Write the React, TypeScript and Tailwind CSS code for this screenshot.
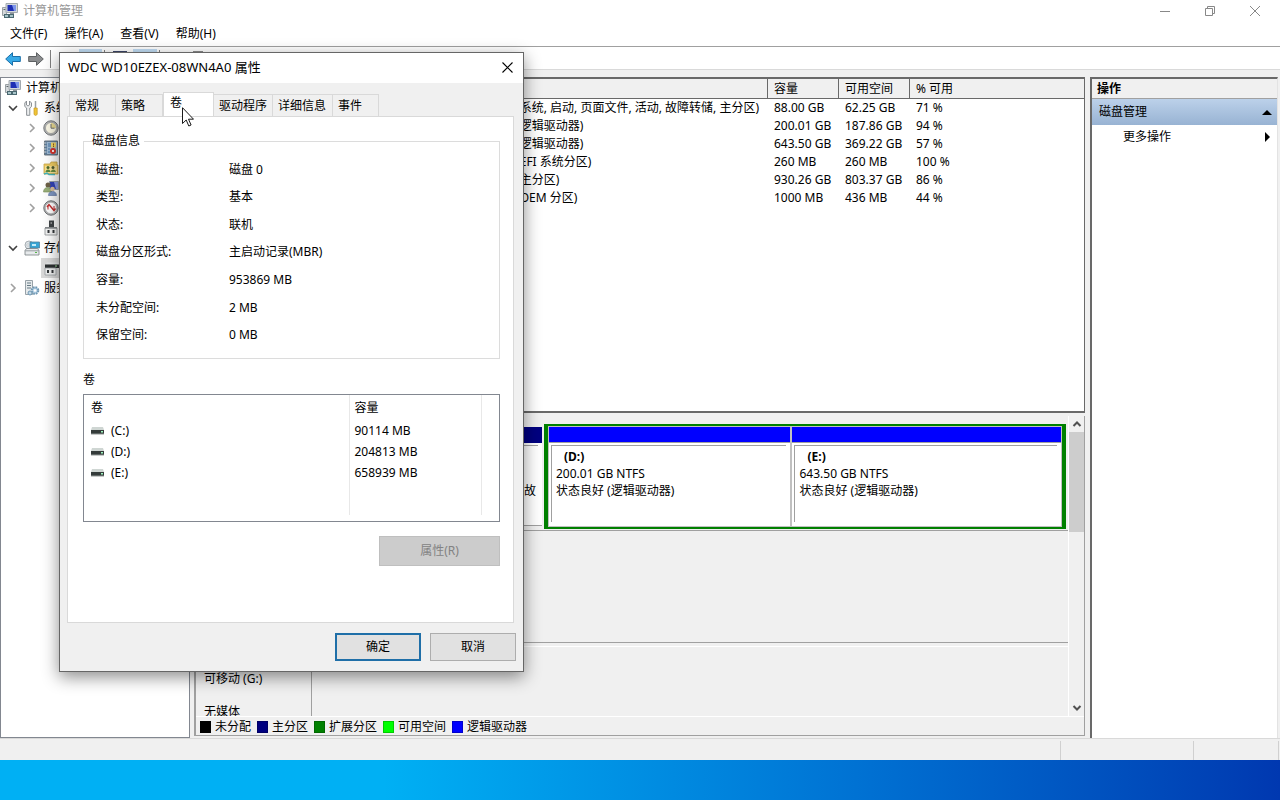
import type { ReactNode } from "react";

interface Volume {
  status: string;
  capacity: string;
  free: string;
  percent: string;
}

const volumes: Volume[] = [
  { status: "状态良好 (系统, 启动, 页面文件, 活动, 故障转储, 主分区)", capacity: "88.00 GB", free: "62.25 GB", percent: "71 %" },
  { status: "状态良好 (逻辑驱动器)", capacity: "200.01 GB", free: "187.86 GB", percent: "94 %" },
  { status: "状态良好 (逻辑驱动器)", capacity: "643.50 GB", free: "369.22 GB", percent: "57 %" },
  { status: "状态良好 (EFI 系统分区)", capacity: "260 MB", free: "260 MB", percent: "100 %" },
  { status: "状态良好 (主分区)", capacity: "930.26 GB", free: "803.37 GB", percent: "86 %" },
  { status: "状态良好 (OEM 分区)", capacity: "1000 MB", free: "436 MB", percent: "44 %" },
];

const diskInfo = [
  ["磁盘:", "磁盘 0"],
  ["类型:", "基本"],
  ["状态:", "联机"],
  ["磁盘分区形式:", "主启动记录(MBR)"],
  ["容量:", "953869 MB"],
  ["未分配空间:", "2 MB"],
  ["保留空间:", "0 MB"],
];

const diskVolumes = [
  ["(C:)", "90114 MB"],
  ["(D:)", "204813 MB"],
  ["(E:)", "658939 MB"],
];

const legend = [
  { label: "未分配", color: "bg-black" },
  { label: "主分区", color: "bg-[#000080]" },
  { label: "扩展分区", color: "bg-[#008000]" },
  { label: "可用空间", color: "bg-[#00ff00]" },
  { label: "逻辑驱动器", color: "bg-[#0000ff]" },
];

function Icon({ children }: { children: ReactNode }) {
  return (
    <svg viewBox="0 0 16 16" className="w-4 h-4 shrink-0">
      {children}
    </svg>
  );
}

function ComputerIcon() {
  return (
    <Icon>
      <path d="M0.5 4.5h4v8h-4z" fill="#d5d9dc" stroke="#9aa1a5" />
      <path d="M1.5 6.5h2" stroke="#5b6468" />
      <path d="M4 0.500h11.500v9H4z" fill="#d3d8dc" stroke="#a2a9af" />
      <path d="M5.500 2H14v6H5.500z" fill="#1e2fb4" />
      <path d="M10 2h4v6h-2z" fill="#7d95ea" />
      <path d="M8 9.500h4v1.500H8z" fill="#8d959c" />
      <path d="M2 11h10v4H2z" fill="#4a6870" />
      <path d="M3 12h3v2H3zM8 12h3v2H8z" fill="#a8c4c9" />
    </Icon>
  );
}

function ToolsIcon() {
  return (
    <Icon>
      <path d="M2.500 1v4l1.500 1 1.500-1V1L7.500 3v3.500L5.800 8v7.300H2.600V8L0.800 6.500V3z" fill="#eceeef" stroke="#81878b" strokeWidth="0.9" />
      <path d="M11.500 1v7" stroke="#9aa0a3" strokeWidth="1.500" />
      <path d="M10 8h3.200v6.500l-1.600 1-1.600-1z" fill="#f0c436" stroke="#c59a22" strokeWidth="0.7" />
    </Icon>
  );
}

function ClockIcon() {
  return (
    <Icon>
      <circle cx="8" cy="8" r="7.200" fill="#b5b7b8" stroke="#747779" strokeWidth="1" />
      <circle cx="8" cy="8" r="5.500" fill="#fbf8e6" stroke="#8d8f90" strokeWidth="0.6" />
      <path d="M8 8V3a5 5 0 0 1 5 5z" fill="#eadb92" />
      <path d="M8 4v4.200h3.500" fill="none" stroke="#6a6c6e" />
    </Icon>
  );
}

function EventIcon() {
  return (
    <Icon>
      <path d="M1.500 1h13v14h-13z" fill="#5c7d9c" stroke="#6b7780" />
      <path d="M4 2h10v12H4z" fill="#9db9d2" />
      <path d="M0.500 3h3M0.500 6h3M0.500 9h3M0.500 12h3" stroke="#d4d8da" />
      <path d="M5 4h3M5 6h3M5 9h2M5 12h2" stroke="#4475a5" />
      <path d="M8 2.500h5v5H8z" fill="#f4d765" />
      <path d="M10.500 3.500v2M10.500 6v1" stroke="#8c5a1c" />
      <circle cx="10" cy="11" r="3" fill="#d5332b" />
      <path d="M9 10l2 2M11 10l-2 2" stroke="#fff" strokeWidth="0.900" />
    </Icon>
  );
}

function SharedFolderIcon() {
  return (
    <Icon>
      <path d="M1 4h6l1-2h6v3h1v9H1z" fill="#f0cd63" stroke="#c7a446" strokeWidth="0.8" />
      <path d="M2 6h12v7H2z" fill="#f9e194" />
      <circle cx="5" cy="7.500" r="1.500" fill="#4c6b2e" />
      <circle cx="10" cy="7.500" r="1.500" fill="#4f5a2f" />
      <path d="M2.500 12c0-3.500 5-3.500 5 0z" fill="#5d8a3a" />
      <path d="M7.800 12c0-3.500 5-3.500 5 0z" fill="#6a8c41" />
      <path d="M1 14l3-1 2 1.500h6" fill="none" stroke="#43b3ba" strokeWidth="1.500" />
    </Icon>
  );
}

function UsersIcon() {
  return (
    <Icon>
      <path d="M6.500 1.500h9v8h-9z" fill="#3343b8" stroke="#9aa1a9" />
      <path d="M11 2h4v7h-2z" fill="#8f9fe8" />
      <circle cx="5" cy="5" r="2.500" fill="#6d6047" />
      <path d="M0.500 12c0-6 8-6 8 0z" fill="#9ab07a" stroke="#748a56" strokeWidth="0.600" />
      <circle cx="9.500" cy="9" r="2.300" fill="#ddc09b" />
      <path d="M5.500 15.500c0-5.500 8-5.500 8 0z" fill="#7f97c4" stroke="#526a9c" strokeWidth="0.600" />
    </Icon>
  );
}

function PerformanceIcon() {
  return (
    <Icon>
      <circle cx="8" cy="8" r="7.200" fill="#b3b5b7" stroke="#6d7072" />
      <circle cx="8" cy="8" r="5.700" fill="#fff" stroke="#999" strokeWidth="0.500" />
      <path d="M4 7l2-2.500 5 6 1.500-2" fill="none" stroke="#c22b2b" strokeWidth="1.400" />
      <path d="M5 9.500v-4M11 6v4" stroke="#c22b2b" />
    </Icon>
  );
}

function DeviceIcon() {
  return (
    <Icon>
      <path d="M6 0.500h5V8H6z" fill="#3f4346" />
      <path d="M7.500 2.500h1.500v1H7.500z" fill="#ddd" />
      <path d="M2 8h12v7H2z" fill="#f3f4f4" stroke="#8b8f92" strokeWidth="0.800" />
      <path d="M2 7h12v1.500H2z" fill="#85898c" />
      <path d="M4.500 10h2v3h-2zM9.500 10h2v3h-2z" fill="#34373a" />
    </Icon>
  );
}

function StorageIcon() {
  return (
    <Icon>
      <circle cx="5" cy="5" r="4" fill="#dfe5e8" stroke="#98a0a4" strokeWidth="0.800" />
      <circle cx="4" cy="5" r="1.200" fill="#fff" stroke="#98a0a4" strokeWidth="0.500" />
      <path d="M6 2h9.500v6H6z" fill="#37a5d5" stroke="#52809a" strokeWidth="0.800" />
      <path d="M8 4h4v2H8z" fill="#c3edfa" />
      <path d="M1 10.500L2.500 8.500h11l1.500 2V15H1z" fill="#e7eaec" stroke="#767d81" strokeWidth="0.800" />
      <path d="M1 10.800h14" stroke="#979da1" />
      <path d="M11 12h2v1h-2z" fill="#55b548" />
    </Icon>
  );
}

function DiskIcon() {
  return (
    <Icon>
      <path d="M3 4l1-1.500h11L16 4z" fill="#e4e6e7" />
      <path d="M2 4.500h14v3.500H2z" fill="#2d3032" />
      <path d="M12 5.500h2v1h-2z" fill="#9ee49a" />
      <path d="M2 8h11v7H2z" fill="#eff0f0" stroke="#9b9fa2" strokeWidth="0.800" />
      <path d="M4 10h2v3H4zM8.500 10h2v3h-2z" fill="#34373a" />
    </Icon>
  );
}

function ServicesIcon() {
  return (
    <Icon>
      <path d="M1.500 0.500h7v14h-7z" fill="#e6eaec" stroke="#98a2a8" />
      <path d="M3 3h4M3 5.500h4M3 8h4" stroke="#667a84" />
      <circle cx="11" cy="10.500" r="3.300" fill="#b4d0e4" stroke="#6f97b3" strokeWidth="2" strokeDasharray="1.700 0.900" />
      <circle cx="11" cy="10.500" r="1.300" fill="#fff" />
      <circle cx="6" cy="13" r="2" fill="#c1d8e6" stroke="#6f97b3" />
    </Icon>
  );
}

function DriveIcon() {
  return (
    <svg viewBox="0 0 14 8" className="w-3.5 h-2 shrink-0">
      <path d="M1 0h11l1 3H0z" fill="#cfd6d3" />
      <path d="M0 3h13v4H0z" fill="#343b3a" />
      <path d="M0 7h13" stroke="#8f9694" />
      <path d="M10 4h2v1.500h-2z" fill="#9df5be" />
    </svg>
  );
}

function Chevron({ open }: { open?: boolean }) {
  return (
    <svg viewBox="0 0 10 10" className="w-2.5 h-2.5 shrink-0">
      <path
        d={open ? "M1 3l4 4 4-4" : "M3 1l4 4-4 4"}
        fill="none"
        stroke={open ? "#404040" : "#a0a0a0"}
        strokeWidth="1.600"
      />
    </svg>
  );
}

function ArrowIcon({ forward }: { forward?: boolean }) {
  return (
    <svg viewBox="0 0 16 14" className="w-4 h-3.5">
      <path
        d={forward ? "M8.500 0.700L15.300 7l-6.800 6.300V9.500H0.700v-5h7.800z" : "M7.500 0.700L0.700 7l6.800 6.300V9.500h7.800v-5H7.500z"}
        fill={forward ? "#8b8d8f" : "#37a9e6"}
        stroke={forward ? "#5d6062" : "#1b6fa8"}
      />
    </svg>
  );
}

interface TreeRowProps {
  icon: ReactNode;
  label?: string;
  indent: string;
  open?: boolean;
  leaf?: boolean;
  selected?: boolean;
}

function TreeRow({ icon, label, indent, open, leaf, selected }: TreeRowProps) {
  return (
    <li className={`flex items-center h-5 whitespace-nowrap ${indent}`}>
      {leaf ? <span className="w-2.5 shrink-0" /> : <Chevron open={open} />}
      <span className={`flex items-center h-5 ${selected ? "ml-1 pl-0.5 pr-24 bg-[#d9d9d9]" : "pl-1.5"}`}>
        {icon}
        {label && <span className="pl-1">{label}</span>}
      </span>
    </li>
  );
}

function ConsoleTree() {
  return (
    <nav className="w-[190px] shrink-0 overflow-hidden bg-white border border-[#828790]">
      <ul>
        <li className="flex items-center gap-[5px] h-5 pl-1 whitespace-nowrap">
          <ComputerIcon />
          <span>计算机管理</span>
        </li>
        <TreeRow indent="pl-[7px]" open icon={<ToolsIcon />} label="系统" />
        <TreeRow indent="pl-[26px]" icon={<ClockIcon />} />
        <TreeRow indent="pl-[26px]" icon={<EventIcon />} />
        <TreeRow indent="pl-[26px]" icon={<SharedFolderIcon />} />
        <TreeRow indent="pl-[26px]" icon={<UsersIcon />} />
        <TreeRow indent="pl-[26px]" icon={<PerformanceIcon />} />
        <TreeRow indent="pl-[26px]" leaf icon={<DeviceIcon />} />
        <TreeRow indent="pl-[7px]" open icon={<StorageIcon />} label="存储" />
        <TreeRow indent="pl-[26px]" leaf selected icon={<DiskIcon />} />
        <TreeRow indent="pl-[7px]" icon={<ServicesIcon />} label="服务" />
      </ul>
    </nav>
  );
}

function VolumeTable() {
  const head = "font-normal text-left px-1.5 border-r border-b border-[#696969] bg-[#f0f0f0]";
  return (
    <div className="flex-1 bg-white border-t-2 border-r border-b-2 border-l-2 border-[#696969]">
      <table className="w-full table-fixed border-separate border-spacing-0 whitespace-nowrap">
        <thead>
          <tr className="h-5">
            <th className={`${head} w-[269px]`}></th>
            <th className={head}></th>
            <th className={`${head} w-[71px]`}>容量</th>
            <th className={`${head} w-[71px]`}>可用空间</th>
            <th className={`${head} w-[174px] border-r-0`}>% 可用</th>
          </tr>
        </thead>
        <tbody>
          {volumes.map((v) => (
            <tr key={v.capacity} className="h-[18px] leading-[18px]">
              <td></td>
              <td className="p-0 overflow-hidden">{v.status}</td>
              <td className="px-1.5 py-0">{v.capacity}</td>
              <td className="px-1.5 py-0">{v.free}</td>
              <td className="px-1.5 py-0">{v.percent}</td>
            </tr>
          ))}
        </tbody>
      </table>
    </div>
  );
}

function Partition({ name, size, grow }: { name: string; size: string; grow: string }) {
  return (
    <div className={`flex flex-col min-w-0 ${grow}`}>
      <div className="h-4 bg-[#0000ff] border-b border-[#a0a0a0]" />
      <div className="flex-1 bg-white pt-0.5 pl-0.5 pr-1 pb-1">
        <div className="h-full border-l border-t border-[#a0a0a0] pl-1 pt-0.5 leading-[17px] whitespace-nowrap">
          <div className="font-bold pl-2">{name}</div>
          <div>{size}</div>
          <div>状态良好 (逻辑驱动器)</div>
        </div>
      </div>
    </div>
  );
}

function DiskGraph() {
  return (
    <div className="flex h-[300px]">
      <div className="flex-1 flex flex-col min-w-0 border-r border-white">
        <div className="flex h-[115px] pt-2 border-b border-[#a0a0a0]">
          <div className="w-[116px] shrink-0 border-r border-[#a0a0a0]" />
          <div className="flex flex-col w-[230px] shrink-0 pt-[3px] pb-1">
            <div className="h-4 bg-[#000080]" />
            <div className="flex-1 bg-white pt-0.5 pr-1 border-b border-[#a0a0a0]">
              <div className="h-full border-t border-[#a0a0a0] pt-9 pr-0.5 text-right leading-[17px] whitespace-nowrap overflow-hidden">
                状态良好 (系统, 启动, 页面文件, 活动, 故
              </div>
            </div>
          </div>
          <div className="flex-1 min-w-0 flex mr-0.5 mb-px ml-0.5 border-x-4 border-y-2 border-[#008000] bg-[#c0c0c0] gap-0.5 p-px">
            <Partition name="(D:)" size="200.01 GB NTFS" grow="flex-[241]" />
            <Partition name="(E:)" size="643.50 GB NTFS" grow="flex-[268]" />
          </div>
        </div>
        <div className="flex h-[112px] border-b border-[#a0a0a0]">
          <div className="w-[116px] border-r border-[#a0a0a0]" />
        </div>
        <div className="flex-1 flex min-h-0 mt-[3px] border-t border-white">
          <div className="w-[116px] border-r border-[#a0a0a0] pl-2 pt-[15px] leading-[33px] overflow-hidden">
            <div>可移动 (G:)</div>
            <div>无媒体</div>
          </div>
        </div>
      </div>
      <div className="flex flex-col items-center w-[15px] bg-[#f0f0f0]">
        <button type="button" aria-label="向上滚动" className="h-4 w-full flex items-center justify-center">
          <svg viewBox="0 0 10 10" className="w-2.5 h-2.5">
            <path d="M1.500 7L5 3.500 8.500 7" fill="none" stroke="#505050" strokeWidth="2" />
          </svg>
        </button>
        <div className="w-full h-[100px] bg-[#cdcdcd]" />
        <button type="button" aria-label="向下滚动" className="mt-auto h-4 w-full flex items-center justify-center">
          <svg viewBox="0 0 10 10" className="w-2.5 h-2.5">
            <path d="M1.500 3L5 6.500 8.500 3" fill="none" stroke="#505050" strokeWidth="2" />
          </svg>
        </button>
      </div>
    </div>
  );
}

function ActionsPane() {
  return (
    <aside className="w-[188px] shrink-0 mr-0.5 bg-white border-t-2 border-l-2 border-t-[#696969] border-l-[#696969] border-r border-r-[#e3e3e3]">
      <h2 className="h-5 flex items-center pl-[5px] font-bold bg-[#f0f0f0] border-b border-[#a0a0a0]">操作</h2>
      <button type="button" className="w-full h-[26px] flex items-center justify-between pl-[7px] pr-[5px] bg-linear-to-b from-[#bcd1ea] to-[#98b3d3]">
        磁盘管理
        <svg viewBox="0 0 10 5" className="w-2.5 h-[5px]">
          <path d="M0 5l5-5 5 5z" />
        </svg>
      </button>
      <button type="button" className="w-full h-6 flex items-center justify-between pl-[31px] pr-[7px]">
        更多操作
        <svg viewBox="0 0 5 10" className="w-[5px] h-2.5">
          <path d="M0 0l5 5-5 5z" />
        </svg>
      </button>
    </aside>
  );
}

function Tab({ label, width, active }: { label: string; width: string; active?: boolean }) {
  return (
    <button
      type="button"
      role="tab"
      aria-selected={!!active}
      className={`${width} text-left border-[#d9d9d9] ${
        active ? "h-[25px] -mb-px bg-white border-x border-t pl-1.5 pb-1" : "h-[22px] bg-[#f0f0f0] border-t border-r pl-[5px]"
      }`}
    >
      {label}
    </button>
  );
}

function PropertiesDialog() {
  const button = "w-[86px] h-7 bg-[#e1e1e1]";
  return (
    <div
      role="dialog"
      aria-label="WDC WD10EZEX-08WN4A0 属性"
      className="absolute left-[59px] top-[52px] w-[465px] h-[620px] flex flex-col bg-[#f0f0f0] border border-[#666] shadow-[0_5px_16px_rgba(0,0,0,0.45)]"
    >
      <header className="flex items-center justify-between h-[30px] pl-2 pr-2.5 pb-0.5 bg-white">
        <h1 className="text-[13px]">WDC WD10EZEX-08WN4A0 属性</h1>
        <button type="button" aria-label="关闭">
          <svg viewBox="0 0 11 11" className="w-[11px] h-[11px]">
            <path d="M0.500 0.500l10 10M10.500 0.500l-10 10" stroke="#000" strokeWidth="1.100" />
          </svg>
        </button>
      </header>

      <div role="tablist" className="flex items-end h-[33px] pl-[9px]">
        <Tab label="常规" width="w-[47px] border-l" />
        <Tab label="策略" width="w-[47px]" />
        <Tab label="卷" width="w-[51px]" active />
        <Tab label="驱动程序" width="w-[59px]" />
        <Tab label="详细信息" width="w-[60px]" />
        <Tab label="事件" width="w-[46px]" />
      </div>

      <div role="tabpanel" className="flex-1 flex flex-col ml-[7px] mr-[9px] pl-[15px] pr-[13px] pt-[15px] bg-white border border-[#d9d9d9]">
        <fieldset className="border border-[#dcdcdc] h-[227px] pl-3">
          <legend className="-ml-1 pr-1 leading-[18px]">磁盘信息</legend>
          <dl className="grid grid-cols-[133px_1fr] grid-rows-7 h-[193px] mt-1.5 items-center">
            {diskInfo.map(([label, value]) => (
              <div key={label} className="contents">
                <dt>{label}</dt>
                <dd>{value}</dd>
              </div>
            ))}
          </dl>
        </fieldset>

        <h2 className="mt-3 leading-[18px]">卷</h2>
        <div className="mt-[5px] h-32 border border-[#828790]">
          <table className="w-full h-[120px] table-fixed border-collapse">
            <thead>
              <tr className="h-[25px]">
                <th className="w-[265px] px-[7px] py-0 text-left font-normal border-r border-[#e8e8e8]">卷</th>
                <th className="w-[132px] px-[5px] py-0 text-left font-normal border-r border-[#e8e8e8]">容量</th>
                <th></th>
              </tr>
            </thead>
            <tbody>
              {diskVolumes.map(([name, size]) => (
                <tr key={name} className="h-[21px]">
                  <td className="px-[7px] py-0 border-r border-[#e8e8e8]">
                    <span className="flex items-center gap-1.5">
                      <DriveIcon />
                      {name}
                    </span>
                  </td>
                  <td className="px-[5px] py-0 border-r border-[#e8e8e8]">{size}</td>
                  <td></td>
                </tr>
              ))}
              <tr>
                <td className="border-r border-[#e8e8e8]"></td>
                <td className="border-r border-[#e8e8e8]"></td>
                <td></td>
              </tr>
            </tbody>
          </table>
        </div>
        <button type="button" disabled className="self-end w-[121px] h-[30px] mt-3.5 bg-[#cccccc] border border-[#bfbfbf] text-[#838383]">
          属性(R)
        </button>
      </div>

      <footer className="flex justify-end gap-[9px] pt-2.5 pb-2.5 pr-[7px]">
        <button type="button" className={`${button} border-2 border-[#1f6fa8]`}>确定</button>
        <button type="button" className={`${button} border border-[#adadad]`}>取消</button>
      </footer>
    </div>
  );
}

export default function App() {
  return (
    <div className="relative min-h-screen flex flex-col bg-[#f0f0f0] text-black text-[12px] leading-4 cursor-default font-['Noto_Sans','Noto_Sans_CJK_SC',sans-serif]">
      <header className="bg-white">
        <div className="flex items-center h-[22px] pl-0.5">
          <ComputerIcon />
          <span className="pl-[5px] text-[#999]">计算机管理</span>
          <div className="flex items-center gap-[35px] ml-auto pr-5">
            <button type="button" aria-label="最小化">
              <svg viewBox="0 0 10 10" className="w-2.5 h-2.5"><path d="M0 5.500h10" stroke="#888" /></svg>
            </button>
            <button type="button" aria-label="还原">
              <svg viewBox="0 0 10 10" className="w-2.5 h-2.5">
                <path d="M0.500 2.500h7v7h-7zM2.500 2.500v-2h7v7h-2" fill="none" stroke="#888" />
              </svg>
            </button>
            <button type="button" aria-label="关闭">
              <svg viewBox="0 0 10 10" className="w-2.5 h-2.5"><path d="M0 0l10 10M10 0L0 10" stroke="#888" /></svg>
            </button>
          </div>
        </div>
        <div role="menubar" className="flex items-center gap-[17px] h-[25px] pl-2.5 border-b border-[#a0a0a0]">
          <button type="button" role="menuitem">文件(F)</button>
          <button type="button" role="menuitem">操作(A)</button>
          <button type="button" role="menuitem">查看(V)</button>
          <button type="button" role="menuitem">帮助(H)</button>
        </div>
        <div role="toolbar" className="flex items-center h-[23px] pt-0.5 pl-[5px] border-b border-[#d9d9d9]">
          <button type="button" aria-label="后退"><ArrowIcon /></button>
          <button type="button" aria-label="前进" className="ml-[7px]"><ArrowIcon forward /></button>
          <span className="w-px h-[18px] ml-1.5 bg-[#808080]" />
          <span className="w-[23px] h-5 ml-7 bg-[#c0dcf3]" />
          <span className="w-px h-[18px] ml-0.5 bg-[#808080]" />
          <span className="w-3.5 h-4 ml-2 bg-[#3c4668]" />
          <span className="w-6 h-5 ml-1.5 bg-[#c0dcf3]" />
          <span className="w-px h-[18px] ml-0.5 bg-[#808080]" />
          <span className="w-2.5 h-4 ml-[33px] bg-[#8a8a8a]" />
        </div>
      </header>

      <main className="flex-1 flex pt-[7px]">
        <ConsoleTree />
        <section className="flex-1 min-w-0 flex flex-col ml-1 mr-[5px] border-b border-[#a0a0a0] mb-0.5">
          <VolumeTable />
          <div className="mt-[3px] border-l-2 border-r border-[#a0a0a0]">
            <DiskGraph />
            <ul className="flex items-center gap-1.5 h-[19px] pl-1 pt-px border-t border-white">
              {legend.map(({ label, color }) => (
                <li key={label} className="flex items-center gap-1">
                  <span className={`w-[11px] h-3 border border-black/20 ${color}`} />
                  {label}
                </li>
              ))}
            </ul>
          </div>
        </section>
        <ActionsPane />
      </main>

      <footer className="flex justify-end h-[22px] pt-0.5 border-t border-[#d9d9d9]">
        <span className="w-[133px] border-l border-[#d0d0d0]" />
        <span className="w-[85px] border-l border-[#d0d0d0]" />
        <span className="w-0.5 border-l border-[#d0d0d0]" />
      </footer>
      <div className="h-10 bg-linear-to-r from-[#00b0f4] from-30% via-[#0070d2] via-68% to-[#0038b0] to-100%" />

      <PropertiesDialog />

      <svg viewBox="0 0 12 20" className="absolute left-[182px] top-[107px] w-3 h-5 pointer-events-none">
        <path d="M0.500 0.700v15.800l3.700-3.500 2.600 6 2.300-1-2.600-5.800h5z" fill="#fff" stroke="#000" strokeWidth="0.900" />
      </svg>
    </div>
  );
}
